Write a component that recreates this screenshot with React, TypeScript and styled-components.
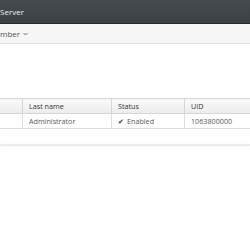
import styled, { createGlobalStyle } from "styled-components";

const GlobalStyle = createGlobalStyle`
  html, body {
    margin: 0;
    padding: 0;
    background: #fff;
    font-family: "Open Sans", "Liberation Sans", sans-serif;
    overflow: hidden;
  }
`;

const Page = styled.div`
  width: 250px;
  height: 250px;
  display: flex;
  flex-direction: column;
  overflow: hidden;
`;

const Masthead = styled.div`
  height: 23px;
  flex-shrink: 0;
  display: flex;
  align-items: center;
  background: linear-gradient(#464b50, #3b4045);
  border-bottom: 1px solid #26292c;
  color: #f0f0f0;
  font-size: 8px;
`;

const Toolbar = styled.div`
  height: 19px;
  flex-shrink: 0;
  display: flex;
  align-items: center;
  gap: 3px;
  background: #f6f6f6;
  border-bottom: 1px solid #e2e2e2;
  color: #4d5258;
  font-size: 8px;
`;

const Chevron = styled.svg`
  width: 5px;
  height: 4px;
  margin-top: 1px;
`;

const Content = styled.div`
  padding-top: 54px;
  display: flex;
  flex-direction: column;
`;

// the table runs past both edges of the window
const Table = styled.table`
  border-collapse: collapse;
  table-layout: fixed;
  width: 300px;
  margin-left: -10px;
  font-size: 7.2px;
`;

const Th = styled.th<{ w: number }>`
  box-sizing: border-box;
  width: ${({ w }) => w}px;
  height: 15px;
  padding: 0 6px;
  text-align: left;
  font-weight: 400;
  color: #333;
  background: linear-gradient(#fafafa, #ececec);
  border: 1px solid #d6d6d6;
  white-space: nowrap;
`;

const Td = styled.td`
  height: 14px;
  padding: 0 6px;
  color: #5a5a5a;
  background: #fff;
  border: 1px solid #dedede;
  white-space: nowrap;
`;

const Check = styled.span`
  color: #333;
  margin-right: 3px;
  font-size: 7px;
`;

const Footer = styled.div`
  margin-top: 15px;
  height: 2px;
  background: #ececec;
  box-shadow: 0 1px 4px rgba(0, 0, 0, 0.06);
`;

export default function App() {
  return (
    <Page>
      <GlobalStyle />
      <Masthead>Server</Masthead>
      <Toolbar>
        mber
        <Chevron viewBox="0 0 10 6" fill="none">
          <path d="M1 1 L5 5 L9 1" stroke="#4d5258" strokeWidth="1.6" />
        </Chevron>
      </Toolbar>
      <Content>
        <Table>
          <thead>
            <tr>
              <Th w={32}></Th>
              <Th w={89}>Last name</Th>
              <Th w={73}>Status</Th>
              <Th w={106}>UID</Th>
            </tr>
          </thead>
          <tbody>
            <tr>
              <Td></Td>
              <Td>Administrator</Td>
              <Td>
                <Check>✔</Check>Enabled
              </Td>
              <Td>1063800000</Td>
            </tr>
          </tbody>
        </Table>
        <Footer />
      </Content>
    </Page>
  );
}
